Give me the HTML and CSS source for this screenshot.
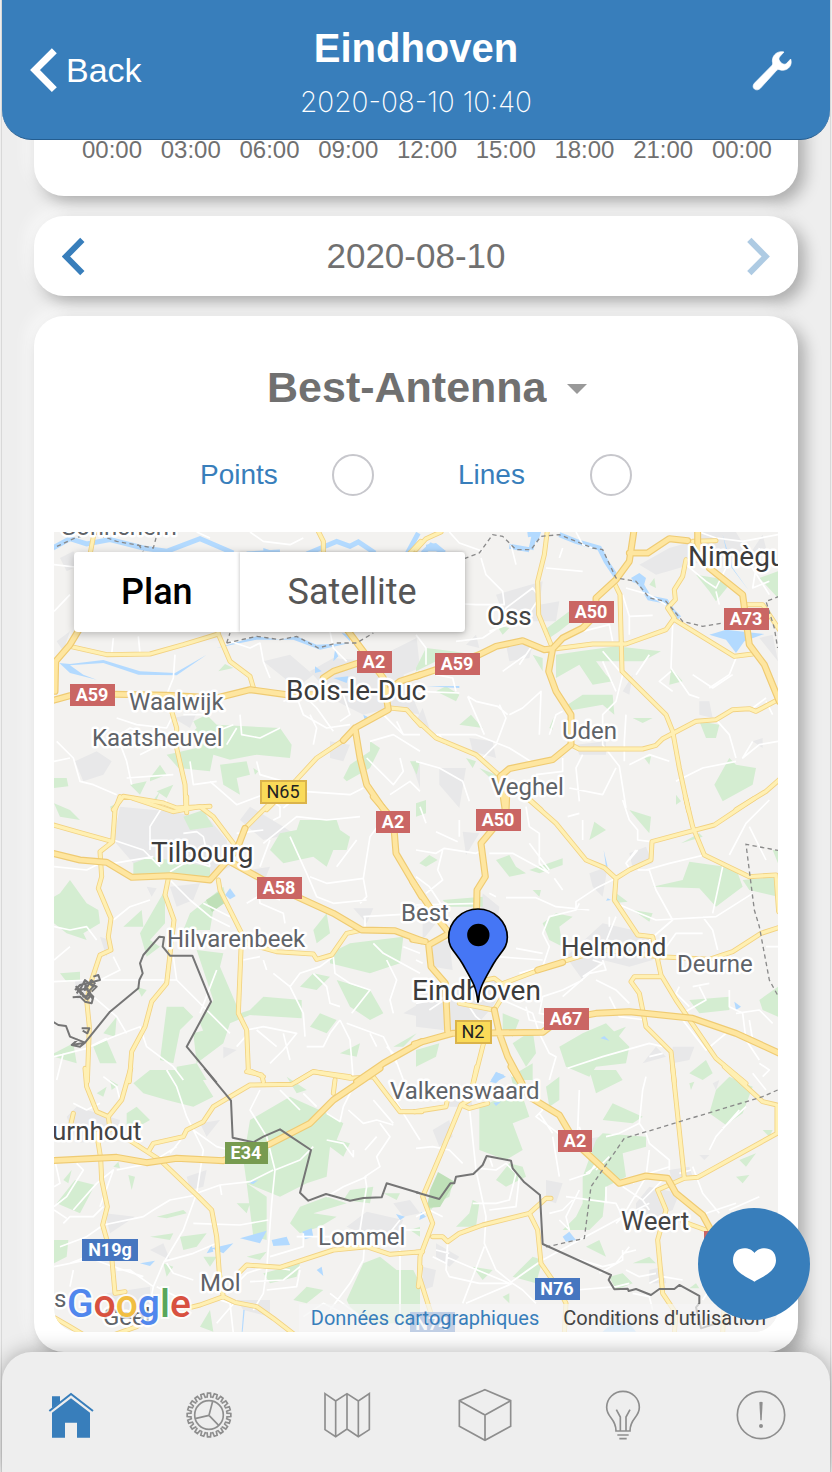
FILE: index.html
```html
<!DOCTYPE html>
<html lang="en">
<head>
<meta charset="utf-8">
<meta name="viewport" content="width=device-width, initial-scale=1">
<title>Eindhoven</title>
<link rel="stylesheet" href="styles.css">
</head>
<body>
<div class="app">
  <header class="topbar">
    <button class="back" type="button">
      <svg class="back-icon" viewBox="87 142 84 138" aria-hidden="true"><path d="M160 153 102 211 160 270"/></svg>
      <span>Back</span>
    </button>
    <div class="heading">
      <h1 class="title">Eindhoven</h1>
      <p class="subtitle">2020-08-10 10:40</p>
    </div>
    <button class="tools" type="button" aria-label="Settings">
      <svg class="tools-icon" viewBox="1008 152 120 120" aria-hidden="true">
        <path class="wrench" d="M1104 155C1086 150 1069 163 1069 182C1070 190 1071 192 1067 196L1015 249C1004 262 1020 276 1033 264L1083 209C1088 205 1092 210 1100 210C1118 209 1130 194 1124 176L1112 189C1108 193 1102 192 1097 189L1091 182C1087 176 1089 171 1093 167Z"/>
      </svg>
    </button>
  </header>

  <main class="content">
    <section class="card axis-card" aria-label="Time axis">
      <span>00:00</span><span>03:00</span><span>06:00</span><span>09:00</span><span>12:00</span><span>15:00</span><span>18:00</span><span>21:00</span><span>00:00</span>
    </section>

    <section class="card day-card">
      <button class="day-btn" type="button" aria-label="Previous day"><svg class="day-icon" viewBox="186 711 72 116" aria-hidden="true"><path d="M247 719 198 769 247 819"/></svg></button>
      <span class="day">2020-08-10</span>
      <button class="day-btn" type="button" aria-label="Next day" disabled><svg class="day-icon" viewBox="990 711 72 116" aria-hidden="true"><path d="M1000 719 1049 769 1000 819"/></svg></button>
    </section>

    <section class="card map-card">
      <div class="picker">
        <select class="picker-select" aria-label="Map mode"><option>Best-Antenna</option></select>
        <svg class="caret" viewBox="0 0 20 10" aria-hidden="true"><path d="M0 0H20L10 10Z"/></svg>
      </div>
      <div class="options">
        <label class="option"><span>Points</span><input class="round" type="checkbox"></label>
        <label class="option"><span>Lines</span><input class="round" type="checkbox"></label>
      </div>

      <div class="map">
        <svg class="map-canvas" viewBox="54 532 724 800" preserveAspectRatio="xMidYMid slice" role="img" aria-label="Map around Eindhoven">
          <defs>
            <g id="highways">
              <path transform="translate(50 528) scale(.33333)" d="M0 520 60 503 150 498 350 502 500 510 600 485 710 500 800 500M880 290 1000 450 1015 545 915 600 930 690 950 770 1005 850M915 600 880 637M820 450 850 430 925 405M1000 500 1050 460 1112 440M15 490 17 400 60 350 90 300"/>
              <path transform="translate(416 528) scale(.33333)" d="M0 445 60 425 190 380 240 355 320 338 385 365 410 362 440 330 500 300 540 260 540 210 600 155 640 100 655 0M410 362 398 430 420 490 465 560 465 650 410 695 280 722 253 745 268 850M640 75 695 75 760 32 815 38M845 0 845 45 880 120 980 200 1000 350 1045 410 1090 520"/>
              <path transform="translate(50 800) scale(.33333)" d="M0 158 90 180 170 187 245 232 360 227 480 240 560 150 585 85M540 185 640 240 740 290 850 340 935 390 1035 392 1115 422M970 -10 1030 60 1038 160 1115 290M920 845 1000 790 1115 725"/>
              <path transform="translate(416 800) scale(.33333)" d="M272 -10 270 40 195 130 208 230 183 270 180 420M-10 245 60 350 100 400 38 435 45 500 88 550 95 695M-10 418 28 425M-5 732 110 700 380 697 430 660 540 640 640 635 830 655 960 700 1095 762M365 510 440 487M235 630 250 700 275 770 318 850"/>
              <path transform="translate(50 1070) scale(.33333)" d="M0 272 200 262 290 278 380 265 520 272 660 222 780 160 850 90 990 -5"/>
              <path transform="translate(416 1070) scale(.33333)" d="M285 -10 340 80 430 135 480 220 610 340 690 318 755 325 780 370 860 435 890 490"/>
            </g>
            <g id="roads">
              <path transform="translate(50 528) scale(.33333)" d="M60 355 170 380 300 378 400 350 505 318 540 400 600 445 612 485M365 550 380 600 380 660 405 770 408 845M190 845 220 805 340 825 380 840 480 835M135 0 120 80M800 0 820 40 820 80M1112 592 1070 545 1020 540M880 637 800 690 740 755 650 845M505 318 500 280M1075 80 1112 40"/>
              <path transform="translate(416 528) scale(.33333)" d="M395 0 385 80 365 160 368 260 405 350M420 362 530 348 630 348 750 305 775 270 755 240 778 215 775 185 800 145 810 95M595 165 612 200 618 430 750 560 770 610 790 720 818 850M465 650 490 663 680 663 720 652 740 632 840 580 900 575 950 545 1000 542 1020 550 1090 513M775 275 955 385 1010 378M990 230 1040 230 1090 305M-5 570 60 630 180 680 253 745M960 845 1050 790 1090 755M0 65 30 32 75 12M830 40 900 38M325 800 375 845"/>
              <path transform="translate(50 800) scale(.33333)" d="M660 10 585 85M250 -5 370 35 450 20 490 50 550 130M410 -10 410 38M210 -10 195 30 188 125 150 155 155 230 145 265 183 355 175 410 183 450 150 465 125 540 110 600 118 680 112 845M0 72 80 95 188 125M355 235 345 285 372 360 350 550 305 605 285 680 245 755 238 845M505 240 510 270 575 400 565 640 590 690 595 810 640 830M575 400 590 430 680 455 790 462 800 478 845 465 890 400 935 390M740 845 790 815 900 830"/>
              <path transform="translate(416 800) scale(.33333)" d="M340 0 420 70 510 180 565 203 600 235 595 300 665 405 710 410 735 525 780 600 900 775 990 850M600 235 640 210 705 180 708 125 800 100 895 75 1015 -5M808 -10 830 80 865 165 1000 230 1080 225 1088 335M735 530 655 530 645 545 670 580 690 680 765 755 775 845M180 545 235 535 262 555 260 590 235 630 130 610M262 550 370 510M440 485 490 470 560 450 730 470 880 478 950 455 1035 400 1090 382M205 720 172 850"/>
              <path transform="translate(50 1070) scale(.33333)" d="M105 -5 110 50 140 125 175 140 215 90 242 -5M175 140 180 180M140 190 152 265 155 330 172 410 158 465 185 560 195 670 225 665M230 205 330 270 440 375 485 420 500 500 508 610 520 680M295 245 310 220 400 200 410 180 460 155 490 110 600 45 725 43 790 5 900 25 970 20 1050 125 1115 125M590 5 635 15 640 35M855 30 850 70M410 715 450 705 520 680 555 697 620 710 670 745 735 795M570 605 590 585 690 592 850 540 950 530 1020 553 1115 545M0 735 60 770 110 800M70 130 62 165M190 795 260 770 300 745M1112 590 1105 650"/>
              <path transform="translate(416 1070) scale(.33333)" d="M182 -10 160 90 135 105 75 250 20 380 50 460 12 560 10 620 48 740M-5 125 90 110 95 85M135 105 160 115 215 100M50 500 80 500 95 515 130 490 200 465 340 430 390 385 405 385M340 430 365 480 375 580 430 660 450 700 445 790M770 -5 805 325 845 322 1083 190 1083 105 1040 95 925 -10M805 325 725 360 750 420 725 510 740 670 780 730 775 790M800 455 870 480M0 547 20 545M925 700 920 790"/>
            </g>
          </defs>

          <rect class="land" x="54" y="532" width="724" height="800"/>

          <g class="town">
            <path transform="translate(50 528) scale(.33333)" d="M180 190 240 130 250 200 200 270ZM20 340 60 310 40 370ZM370 570 440 555 420 600ZM75 700 140 670 185 700 160 740 100 760ZM640 400 720 380 790 440 740 480ZM780 430 850 390 960 400 1100 330 1110 420 1060 440 1110 560 1020 540 940 560 860 520ZM840 640 900 650 880 700 840 690ZM1090 720 1110 710V780ZM30 90 70 70 90 110 50 130Z"/>
            <path transform="translate(416 528) scale(.33333)" d="M240 200 380 160 370 230 430 220 420 280 270 280ZM270 350 350 350 340 390 280 400ZM150 350 180 320 190 360ZM670 110 760 60 830 40 860 12 960 12 1000 80 1040 20 1050 60 980 110 880 120 860 100 720 140ZM480 650 570 640 570 680 490 680ZM620 490 650 440 640 500ZM160 630 230 640 240 690 170 670ZM20 540 40 600 0 580ZM70 720 150 720 130 840 70 770ZM850 520 880 520 890 570 850 560ZM1010 640 1040 630V660ZM1030 330 1070 320 1086 400Z"/>
            <path transform="translate(50 800) scale(.33333)" d="M210 20 370 35 480 60 530 120 540 200 480 230 250 190 190 120ZM570 60 600 20 700 80 730 100 640 120ZM360 260 450 250 430 300 380 320ZM290 260 320 265 305 290ZM910 325 970 325 950 370ZM75 540 110 540 105 590 80 600ZM520 740 560 750 520 775ZM600 210 660 200 640 250ZM150 410 180 420 170 470ZM1060 640 1110 610V650Z"/>
            <path transform="translate(416 800) scale(.33333)" d="M140 95 190 100 150 165ZM640 160 690 140 710 190 650 205ZM520 220 575 200 560 290 530 260ZM200 280 250 320 240 400 190 370ZM50 430 100 420 110 510 50 500ZM0 590 100 560 230 540 260 560 230 620 160 700 0 680ZM450 470 560 370 650 390 720 420 710 480 640 500 560 480 500 540ZM680 790 720 740 750 770ZM770 740 835 740 820 780 770 790ZM20 330 60 370 20 420Z"/>
            <path transform="translate(50 1070) scale(.33333)" d="M50 140 80 110 210 150 200 200 80 220ZM410 320 470 300 460 350 420 360ZM165 430 255 440 180 490ZM890 470 950 425 1060 450 1040 490 930 490ZM560 690 660 690 660 740 580 720ZM450 160 510 150 470 200ZM1030 400 1080 390 1110 430 1060 440ZM680 120 720 90 720 130ZM170 670 300 650 300 730 180 760ZM300 540 340 520 360 570Z"/>
            <path transform="translate(416 1070) scale(.33333)" d="M50 180 100 150 110 200 70 230ZM60 520 130 560 100 590 60 560ZM20 590 60 600 50 650 20 660ZM390 330 440 340 420 400 390 390ZM660 400 700 350 790 370 770 420 700 450 660 430ZM760 300 820 290 830 320 770 340ZM700 600 740 590 750 640 700 640ZM500 210 550 200 530 250ZM890 40 910 30 900 60ZM850 255 880 255 865 270ZM90 60 160 60 170 110 100 110Z"/>
          </g>

          <g class="green">
            <path transform="translate(50 528) scale(.33333)" d="M505 430 525 408 550 420ZM430 580 470 560 500 590 690 600 725 650 720 690 620 680 540 695 490 680 480 730 385 720 350 680 440 660 420 620 440 600ZM510 710 590 700 600 740 560 750 570 800 520 770ZM300 750 330 710 350 740 300 760ZM12 750 50 750 55 775 12 780ZM240 770 290 760 270 800ZM320 790 370 770 350 810ZM880 750 900 710 960 670 960 640 990 660 960 720 890 760ZM1080 700 1110 700 1100 740ZM300 830 330 790 310 840ZM610 720 625 730 615 740Z"/>
            <path transform="translate(416 528) scale(.33333)" d="M380 310 460 250 480 270 430 310 400 330ZM240 290 280 300 260 320ZM0 420 30 360 110 370 180 380 60 400 0 430ZM420 380 490 370 600 355 735 370 680 400 540 400 570 440 590 460 530 470 490 410 420 450ZM60 490 90 475 130 500 120 520ZM440 540 500 500 590 500 595 560 560 530 450 550ZM130 590 165 560 200 600ZM400 600 412 570 410 605ZM650 570 710 570 680 585ZM760 470 765 420 800 460ZM840 140 900 150 940 170 900 220 880 190ZM1030 150 1086 130V210ZM700 170 715 150 720 180ZM850 580 910 590 900 630 870 630ZM895 770 940 690 960 710 1020 720 1010 770 920 820ZM685 690 705 685 700 710ZM150 690 180 700 170 720ZM190 720 240 740 245 770ZM350 380 380 390 380 430ZM780 800 795 820 780 830Z"/>
            <path transform="translate(50 800) scale(.33333)" d="M30 280 60 240 110 310 145 330 150 370 100 400 110 420 50 400 12 370V290ZM250 190 300 170 480 200 480 230 250 230ZM660 150 690 100 740 90 750 60 860 60 870 90 900 110 890 150 850 150 830 200 790 170 700 190ZM400 50 460 30 490 80 420 90ZM270 400 345 270 345 370 300 420 330 440 290 470ZM220 380 275 330 280 380ZM470 300 520 260 530 300 490 330 480 390 400 390 420 340ZM790 390 830 340 840 400 800 430ZM440 450 520 460 510 500 570 640 600 630 640 590 755 600 755 655 600 645 540 670 480 740 450 670 490 600ZM840 460 900 430 1060 410 1050 490 960 520 840 490ZM750 560 790 520 840 530 800 570ZM860 540 960 570 1000 640 960 660 900 620ZM780 680 810 640 860 660 830 700ZM350 620 400 620 430 650 390 690 370 790 330 780ZM430 700 540 670 520 730 440 790ZM160 700 200 650 195 710ZM130 740 170 720 200 790 150 790ZM30 520 90 515 90 540 50 545ZM870 760 930 730 920 770ZM1030 740 1100 700 1060 740ZM260 560 290 570 275 590ZM12 760 70 730 80 790 12 770ZM12 10 60 30 90 60 30 50ZM380 800 440 790 470 840 380 840ZM180 20 200 10 195 60Z"/>
            <path transform="translate(416 800) scale(.33333)" d="M10 190 40 165 65 180 30 200ZM240 180 280 165 300 200 330 220 280 230ZM340 210 440 175 440 195 370 220ZM520 120 535 65 570 90ZM640 30 705 50 700 100ZM710 260 800 240 820 185 960 205 980 260 900 320 850 265ZM380 370 420 340 470 350 430 380 440 440 400 420ZM80 300 200 290 200 320 100 320ZM590 310 595 275 635 305ZM650 330 710 340 700 365ZM980 240 1086 230V290L1000 270ZM820 600 940 590 940 630 850 640ZM1030 600 1086 560V650L1040 630ZM430 740 500 700 570 670 640 740 630 790 540 800 520 830 450 800ZM260 640 310 660 290 710 260 690ZM290 730 350 690 360 760 330 800ZM0 750 70 730 60 770 0 800ZM820 820 870 780 890 820 860 840ZM300 820 350 790 350 840 310 840ZM350 270 375 270 370 290ZM0 10 30 0V40L0 50ZM580 700 630 680 600 720ZM795 130 850 100 860 110ZM1070 150 1086 150V190Z"/>
            <path transform="translate(50 1070) scale(.33333)" d="M250 40 300 0 440 0 490 80 430 110 350 90 280 70ZM140 70 170 50 160 80ZM180 30 205 45 185 60ZM230 130 260 110 300 150 230 190ZM20 400 75 330 135 345 90 430ZM40 330 65 300 55 340ZM600 150 720 80 830 130 880 160 860 210 900 220 880 260 840 230 830 320 770 340 690 380 590 340 580 270ZM710 20 770 60 740 70ZM235 315 255 320 245 360ZM190 290 205 275 210 295ZM320 440 400 420 410 430 350 445ZM300 500 370 490 360 510ZM390 500 470 490 440 530 400 540ZM560 400 600 400 590 430ZM720 460 750 410 830 380 890 400 790 430 860 440 810 470 750 490ZM900 360 970 350 960 400 880 390ZM590 340 650 380 650 510 610 500ZM590 560 650 545 630 570ZM640 610 750 580 740 620 660 640ZM730 690 770 650 820 660 770 700ZM890 690 940 580 990 560 1040 600 1090 600 1110 640V760H960L900 710ZM12 510 55 510 50 560 12 580ZM450 770 480 720 490 785ZM340 580 370 590 350 620ZM460 560 500 560 480 590ZM1000 370 1050 370 1040 390ZM1080 480 1110 470V500Z"/>
            <path transform="translate(416 1070) scale(.33333)" d="M190 110 240 90 320 80 340 140 290 160 320 240 270 270 190 240 190 190ZM390 50 430 20 430 90 400 110ZM560 150 590 100 680 140 650 160ZM520 0 600 0 620 30 540 70ZM880 130 900 60 940 20 1010 50 980 130 930 165ZM540 210 560 190 690 200 690 230 620 250 630 320 570 350 560 440 520 480 440 480 480 440 500 400 500 320ZM240 330 280 280 320 290 330 320 270 350ZM60 400 30 440 60 340 110 340 100 380ZM120 470 160 430 170 390 190 400 180 470ZM510 530 550 510 570 560ZM580 620 620 610 650 640 600 660ZM650 580 700 560 720 580ZM170 590 230 600 200 630ZM350 560 380 570 360 640 290 620ZM970 270 1020 250 990 290ZM960 320 1000 315 980 340ZM840 640 850 655 820 655ZM280 0 310 10 340 70 290 40ZM1040 180 1070 180 1060 200ZM820 40 835 35 825 60ZM260 680 280 670V700Z"/>
          </g>
          <path class="forest" d="M430 1190 438 1172 455 1182 440 1207 427 1208ZM206 900 222 890 226 902 212 912Z"/>

          <g class="water">
            <path transform="translate(50 528) scale(.33333)" d="M0 65 60 32 110 48 180 35 280 60 350 70 450 32 550 75M770 78 860 40 900 55 925 42 975 75M1070 80 1105 15M590 78 690 72"/>
            <path transform="translate(416 528) scale(.33333)" d="M20 75 45 52 85 75M345 65 355 20M335 20 365 15M280 55 340 65M430 20 480 40 550 60 570 100 600 145M650 155 670 160 700 210 750 220 770 250 790 270"/>
          </g>
          <g class="pond">
            <path transform="translate(50 528) scale(.33333)" d="M28 405 60 408 160 396 270 430 375 435 470 380 380 442 265 440 160 405 60 412 100 440 140 455 60 435ZM500 360 620 325 690 335 740 325 800 350 900 345 810 365 730 335 620 335ZM850 400 855 365 865 385ZM795 435 795 415 815 430ZM850 450 895 445 890 465ZM875 315 900 320 900 340ZM940 560 960 570 945 580ZM510 220 500 245 520 240ZM640 60 670 70 640 72Z"/>
            <path transform="translate(416 528) scale(.33333)" d="M880 320 930 305 1045 318 985 340 960 375 930 335ZM645 150 670 135 690 150 680 185ZM30 475 130 474 130 480ZM920 20 940 110 1000 190 950 120ZM335 12 375 12 365 45ZM30 50 60 45 90 70 30 70Z"/>
            <path transform="translate(50 800) scale(.33333)" d="M525 285 540 265 557 288 540 298Z"/>
            <path transform="translate(416 800) scale(.33333)" d="M563 150 575 200 570 200ZM955 605 975 620 960 630ZM553 715 565 708 580 722ZM225 840 240 815 270 830 250 840ZM575 295 585 300 570 302Z"/>
            <path transform="translate(50 1070) scale(.33333)" d="M570 505 650 482 630 520ZM665 510 710 500 720 525 670 528ZM757 485 785 475 790 500 765 508ZM485 535 550 520 520 550ZM270 580 315 572 300 588ZM470 550 485 525 490 545ZM800 600 815 590 820 618ZM1038 432 1065 440 1050 450ZM595 338 625 330 610 342ZM575 785 580 720 584 720 578 785Z"/>
            <path transform="translate(416 1070) scale(.33333)" d="M222 35 245 8 265 15 240 40ZM440 500 460 485 480 510 450 515ZM10 450 15 425 30 440ZM560 785 600 750 640 760 660 785ZM232 98 255 95 240 108Z"/>
          </g>

          <g class="lanes">
            <path transform="translate(50 528) scale(.33333)" d="M12 110 100 120 140 90 230 100M190 330 185 380M265 325 270 375M60 200 12 250M375 380 370 450 350 500M540 340 600 360 630 345 640 400 660 450M600 12 640 40 720 50 760 30M440 12 480 30M570 560 575 620 630 630 690 600M200 570 260 590 350 600 370 560M400 560 470 560 520 530M20 640 70 690 90 760 130 770 200 800M200 620 230 700 245 770M180 640 240 600 300 620M12 700 60 690M420 700 430 770 500 760M230 750 370 740M480 760 560 830 640 800M620 700 630 740 700 760M730 480 760 560 830 600 900 590M700 520 760 500 800 540 850 610M780 560 800 600 790 650M880 500 900 560 870 580M840 310 850 360 890 400M1000 560 1060 620 1110 620M960 640 1030 620 1110 670M1040 580 1060 620M950 690 1030 770 1060 730 1050 690M1020 800 1080 760 1110 790M700 840 760 790 900 800 940 780M560 600 530 650M270 680 350 640M500 610 550 590"/>
            <path transform="translate(416 528) scale(.33333)" d="M100 12 130 45 200 70M195 90 210 140 260 190 265 230 180 230 145 228M285 50 300 110M390 120 500 130M430 90 440 60M480 12 500 50 530 60M260 280 270 240 350 180 365 200M220 310 330 270 370 210M120 340 200 330 260 290M0 320 30 360 30 410M60 440 110 450 120 490M0 490 130 495M155 505 180 520 245 535 275 560M155 505 205 620M280 560 320 540 375 490 370 620M330 380 260 430M350 350 310 410M400 620 420 560 440 550M620 440 600 520 560 560 560 650 610 715 630 840M500 680 480 720 490 820M630 560 625 640 625 700M560 370 620 440M600 490 560 400M500 310 580 290 590 340M620 200 640 265 710 262M640 265 640 320M630 180 700 200 750 230M770 290 765 420 820 500 850 510M765 430 730 460 770 490M700 380 660 440M950 440 890 480 830 440M960 390 940 440 880 480M810 110 870 160 900 180 930 120M900 190 910 230M1010 640 980 690 1030 650 1086 640M900 575 940 620 960 690M760 700 700 680 640 710M780 760 860 720 960 700M1010 540 1050 510M1050 520 1070 560M60 620 180 620 280 660 360 710M70 620 90 650M200 690 240 650 270 570 250 530M0 700 70 720 140 760 160 820M360 740 440 730 440 690M460 780 560 800 600 720M850 12 900 30 980 40 1086 20M1030 60 1010 180 1060 160M990 90 1060 200"/>
            <path transform="translate(50 800) scale(.33333)" d="M12 200 110 210 150 190M190 120 280 150 330 200M350 0 300 80 300 150M400 100 440 95 460 110 480 200M190 190 310 170M360 215 420 180 480 200M660 0 690 20 690 50 670 60M640 130 740 50 830 60 930 50M720 110 770 220 800 290 850 310 950 300M660 120 630 200M560 100 640 90M780 230 830 250 940 235 960 110 990 70M940 235 950 290 930 310M860 200 920 120M940 350 1110 340M945 350 945 390 1000 400M360 240 420 300 480 350 540 380M590 310 640 280 690 300M625 270 630 310 700 340 705 370M460 310 540 350M190 360 240 320 300 300M12 380 60 390 110 380 140 420M190 470 210 510 110 560M12 545 120 540 380 540M370 470 380 540 480 640 540 700M500 510 450 640M580 480 630 470M640 480 650 510M670 520 720 560 760 640 765 710M720 560 750 520 810 500 850 470M790 520 830 560 840 610 870 620M850 470 855 520 900 550 960 570 905 640M1030 640 1020 600 1040 540 1010 480M970 430 1000 460 1110 520M590 690 640 680 740 700 700 750 660 790M680 740 620 690M700 700 720 780M870 660 900 720 910 840M870 660 840 700 820 740 770 740M960 700 980 740M890 670 1000 710 1040 790M120 740 190 710 270 680 290 740 370 800 400 840M130 590 200 650 230 700M12 770 110 745 170 715M60 440 12 480M560 740 595 700M1060 840 1030 760 1010 740M40 760 20 840M1060 440 1110 460"/>
            <path transform="translate(416 800) scale(.33333)" d="M12 20 30 70M0 150 60 160 85 145 180 160 200 150M60 95 125 125M130 110 130 60M80 150 65 210 80 240 30 280M0 230 40 260 80 320M0 315 190 310M330 20 340 80 370 100 370 190 395 215M220 160 290 160 400 220M400 210 340 130M500 60 500 120M455 50 490 40M620 0 640 60 665 90 665 120 705 125M660 150 630 190 640 205M665 150 640 180M415 235 440 270M220 280 240 290 M270 293 360 293 420 320 520 330M600 235 540 265 480 305 480 330 400 350 380 400 400 440 380 500 310 520M580 350 580 380M480 330 490 310M380 460 300 445M240 470 380 480M600 310 670 340 720 360 900 350 1010 280M665 210 700 210 720 270 770 360 700 420M865 165 760 190 690 210M940 165 990 70 1060 0M1000 80 1050 180M920 200 890 340M860 350 890 390 905 450M730 470 780 400 860 400M1050 440 1090 440M890 480 960 510M500 530 560 490 530 480M500 540 440 570 380 590 370 640 430 650M560 480 570 510 520 520 440 590M540 540 600 570 640 610M260 600 350 640 370 700 400 760 420 770 400 840M330 620 340 660 390 670M40 630 100 590 0 610M820 620 780 580 790 560M800 640 870 600 850 560M940 570 940 620 980 640 990 720 1030 780M960 640 1030 630 1070 670M800 660 870 750 930 700 950 690M455 805 560 770 700 730 740 740M690 660 610 650 580 590M830 560 880 550M240 700 180 650 160 620M700 770 740 760M1030 790 1060 810 1040 830M560 450 600 350M0 480 20 490M430 650 480 690M1000 660 1010 720"/>
            <path transform="translate(50 1070) scale(.33333)" d="M350 0 380 50 410 140 430 180 460 240 440 370 400 480 340 580 310 650 300 700M430 180 500 230 540 240M630 60 600 120 650 200 675 300 665 400 650 600 640 670 610 720M675 300 750 270 790 230M440 370 510 345 600 335 670 300M510 345 515 375M380 230 300 280 200 300M150 100 110 120 70 100M160 20 200 50 210 90M12 410 50 380 100 300 80 280M40 460 60 440 130 440 160 410M50 445 12 420M30 530 110 500 160 465 280 440 310 420 360 390 440 375M70 420 140 340 190 300 150 410M60 580 110 560 190 590M190 590 280 620M430 460 570 465 655 450M340 575 430 550 500 520M350 580 370 610 430 630 M660 560 760 530 760 490M740 500 900 500M600 635 700 630 750 590M830 130 870 155 880 110 910 50M690 60 750 120M760 70 800 110M895 120 940 160 980 150 1030 165M970 90 1030 160M830 210 880 220 910 260 910 240M990 160 1020 200 980 260 990 290 945 320 950 350 930 480M945 240 980 200M1110 210 1060 130 1030 80M945 500 940 570 900 640 840 720M1050 540 1050 780M1050 450 1010 500 950 500M1110 480 1050 480M530 670 590 610 650 590M720 600 600 580M12 590 110 570M60 650 70 600M310 650 240 600 200 600M560 690 500 760M320 650 400 690M950 320 880 350 830 380M400 200 360 250M750 600 740 650 650 660M12 260 30 340 12 350M760 740 820 700 900 740M840 670 930 740M550 790 540 700 510 690"/>
            <path transform="translate(416 1070) scale(.33333)" d="M160 110 180 300 210 440 205 520 240 600 290 640 320 660 360 700M205 530 140 700 M95 540 90 600 100 620 190 640 280 640M90 560 160 590 280 640 380 570 500 505 620 440 700 400M290 640 220 670 150 700M280 640 350 590 380 570M280 0 290 20 M340 60 380 120 360 140 440 200M370 130 410 190M410 200 430 320M490 60 485 180M500 200 490 170M510 310 540 290M460 330 520 310 540 280M450 380 600 400 620 440M430 450 460 480 450 440 490 360M570 200 610 190 670 160 690 190 700 220 760 270 760 300M670 160 680 60 690 20M700 240 690 320 620 440 600 460M570 350 570 400M760 290 700 310 650 340M620 350 680 390 700 420M680 390 750 320M830 290 860 370 910 430M825 300 790 310M970 120 900 200 880 240M920 175 990 110M1050 60 1010 10M230 290 220 260M190 295 240 300 270 280 300 310 280 390 240 400 170 400M310 320 300 410 220 420M0 235 50 230 100 240 140 280M460 560 560 590 600 580 640 530M480 660 600 650 640 640M550 610 620 570 620 540M800 630 740 620 700 640M650 670 700 680 710 720 M660 540 620 550M860 690 920 600 880 570M0 440 40 420 80 440M60 540 100 550M50 560 90 580 95 520M870 430 960 400M1030 380 940 420M400 430 440 420 470 390M580 260 540 300M630 600 670 620 720 610"/>
          </g>

          <use class="road-edge" href="#roads"/>
          <use class="road-fill" href="#roads"/>
          <use class="highway-edge" href="#highways"/>
          <use class="highway-fill" href="#highways"/>

          <g class="province">
            <path transform="translate(50 528) scale(.33333)" d="M0 65 75 30 130 15 200 40 310 60 318 30M265 50 280 70M530 345 540 315M530 345 620 325 690 335 740 325 805 360 860 345 920 345 970 315"/>
            <path transform="translate(416 528) scale(.33333)" d="M145 92 190 75 230 20 260 25 300 65 345 65 375 25 430 20 530 60 560 65 600 150 660 160 700 210 750 220 800 280 860 295 920 285M1090 205 1050 220 1075 300 1085 360"/>
            <path transform="translate(416 800) scale(.33333)" d="M1090 152 990 133 1015 330 1030 380 1060 540 1090 595"/>
            <path transform="translate(416 1070) scale(.33333)" d="M1085 60 1040 80 625 205 525 350 505 505 385 532"/>
          </g>
          <g class="border">
            <path transform="translate(50 800) scale(.33333)" d="M0 660 25 675 48 678 60 710 105 728 180 635 265 565 268 540 278 520 270 490 280 465 328 410 342 412 338 440 360 467 427 467 483 605 410 740 500 848M65 735 105 728 90 740 65 735 85 718M95 685 118 685 112 700 98 692M75 570 90 555 110 550 130 545 150 540 145 525 130 530M68 592 90 590 105 605 125 610 130 590 115 575 130 560 105 540 95 560 80 580M90 570 110 565 120 585 100 590ZM120 550 140 560 125 575M110 600 125 585M78 558 85 575M100 545 112 560 124 540 136 552M96 578 108 596 118 572 128 598M82 562 94 584M108 548 104 570 116 566"/>
            <path transform="translate(50 1070) scale(.33333)" d="M463 -5 543 92 548 203 610 217 640 200 690 178 783 240 750 368 775 392 828 372 900 392 940 384 995 382 1010 340 1110 370"/>
            <path transform="translate(416 1070) scale(.33333)" d="M0 367 70 387 103 340 115 340 120 320 172 312 200 285 212 258 285 272 290 295 325 337 372 375 380 522 585 615 578 630 595 658 635 656 638 663 660 657 705 675 730 657 775 657 790 645 850 678 850 700 840 712 855 775 900 760"/>
          </g>

          <g class="place">
            <text x="60" y="535">Gorinchem</text>
            <text x="129" y="710">Waalwijk</text>
            <text x="92" y="746">Kaatsheuvel</text>
            <text x="562" y="739">Uden</text>
            <text x="491" y="795">Veghel</text>
            <text x="167" y="947">Hilvarenbeek</text>
            <text x="401" y="921">Best</text>
            <text x="677" y="972">Deurne</text>
            <text x="390" y="1099">Valkenswaard</text>
            <text x="318" y="1245">Lommel</text>
            <text x="200" y="1291">Mol</text>
            <text x="103" y="1325">Geel</text>
            <text x="54" y="1307">s</text>
          </g>
          <g class="place town-name">
            <text x="487" y="625">Oss</text>
            <text x="561" y="956">Helmond</text>
            <text x="52" y="1140">urnhout</text>
            <text x="621" y="1230">Weert</text>
          </g>
          <g class="place city-name">
            <text x="688" y="566">Nimègue</text>
            <text x="286" y="700">Bois-le-Duc</text>
            <text x="151" y="862">Tilbourg</text>
            <text x="412" y="1000">Eindhoven</text>
          </g>

          <g class="shield red">
            <rect x="70" y="684" width="45" height="22"/><text x="92" y="701">A59</text>
            <rect x="357" y="651" width="35" height="22"/><text x="374" y="668">A2</text>
            <rect x="435" y="653" width="45" height="22"/><text x="457" y="670">A59</text>
            <rect x="569" y="601" width="45" height="22"/><text x="591" y="618">A50</text>
            <rect x="724" y="608" width="45" height="22"/><text x="746" y="625">A73</text>
            <rect x="376" y="811" width="34" height="22"/><text x="393" y="828">A2</text>
            <rect x="476" y="809" width="45" height="22"/><text x="498" y="826">A50</text>
            <rect x="257" y="877" width="45" height="22"/><text x="279" y="894">A58</text>
            <rect x="544" y="1008" width="45" height="22"/><text x="566" y="1025">A67</text>
            <rect x="558" y="1130" width="34" height="22"/><text x="575" y="1147">A2</text>
            <rect x="704" y="1231" width="45" height="22"/>
          </g>
          <g class="shield yellow">
            <rect x="261" y="781" width="45" height="22"/><text x="283" y="798">N65</text>
            <rect x="456" y="1021" width="35" height="22"/><text x="473" y="1038">N2</text>
          </g>
          <g class="shield euro"><rect x="225" y="1142" width="43" height="22"/><text x="246" y="1159">E34</text></g>
          <g class="shield blue">
            <rect x="82" y="1239" width="56" height="22"/><text x="110" y="1256">N19g</text>
            <rect x="535" y="1278" width="45" height="22"/><text x="557" y="1295">N76</text>
            <rect x="410" y="1312" width="45" height="22"/><text x="432" y="1330">N74</text>
          </g>

          <g class="marker" transform="translate(416 800) scale(.33333)">
            <path d="M186 608C181 560 170 545 140 492 116 452 98 445 98 412A88 85 0 0 1 274 412C274 445 256 452 232 492 202 545 191 560 186 608Z"/>
            <circle cx="187" cy="405" r="31"/>
          </g>
          <text class="brand" x="67" y="1317"><tspan class="b">G</tspan><tspan class="r">o</tspan><tspan class="y">o</tspan><tspan class="b">g</tspan><tspan class="g">l</tspan><tspan class="r">e</tspan></text>
        </svg>
        <div class="map-type">
          <button class="type-btn active" type="button">Plan</button>
          <button class="type-btn" type="button">Satellite</button>
        </div>
        <div class="credits">
          <a class="credit-data" href="#data">Données cartographiques</a>
          <a class="credit-terms" href="#terms">Conditions d'utilisation</a>
        </div>
      </div>
    </section>
  </main>

  <button class="fab" type="button" aria-label="Favourite">
    <svg class="fab-icon" viewBox="950 528 128 104" aria-hidden="true"><path d="M1014 546C1003 526 950 521 950 568C951 600 985 614 1014 631C1043 614 1077 600 1078 568C1078 521 1025 526 1014 546Z"/></svg>
  </button>

  <nav class="tabs" aria-label="Main">
    <a class="tab" href="#home" aria-label="Home" aria-current="page">
      <svg class="tab-icon" viewBox="129 142 168 168"><path class="solid" d="M156 219 213 176 270 219V294H231V249H195V294H156ZM156 170H180V187L156 205Z"/><path class="roof" d="M148 214 213 163 279 214"/></svg>
    </a>
    <a class="tab" href="#settings" aria-label="Settings">
      <svg class="tab-icon" viewBox="-84 -84 168 168">
        <defs>
          <path id="tooth" d="M-8.500 -53.300-5.500 -54-4.500 -65.500H4.500L5.500 -54 8.500 -53.300"/>
          <g id="teeth"><use href="#tooth"/><use href="#tooth" transform="rotate(18)"/><use href="#tooth" transform="rotate(36)"/><use href="#tooth" transform="rotate(54)"/><use href="#tooth" transform="rotate(72)"/></g>
        </defs>
        <use href="#teeth"/><use href="#teeth" transform="rotate(90)"/><use href="#teeth" transform="rotate(180)"/><use href="#teeth" transform="rotate(270)"/>
        <circle r="43"/><path d="M0 1 11 -41M0 1-42 11M0 1 29 31"/>
      </svg>
    </a>
    <a class="tab" href="#map" aria-label="Map">
      <svg class="tab-icon" viewBox="957 142 168 168"><path d="M975 162 1007 184 1041 162 1075 184 1108 162V270L1075 291 1041 268 1007 291 975 270ZM1007 184V291M1041 162V268M1075 184V291"/></svg>
    </a>
    <a class="tab" href="#box" aria-label="Network">
      <svg class="tab-icon" viewBox="123 142 168 168"><path d="M207 150 284 183V260L207 302 130 260V183ZM130 183 207 226 284 183M207 226V302"/></svg>
    </a>
    <a class="tab" href="#tips" aria-label="Tips">
      <svg class="tab-icon" viewBox="537 142 168 168"><path d="M600 274C600 235 572 235 572 203A49 48 0 0 1 670 203C670 235 642 235 642 274ZM601 210 613 232V274M642 210 630 232V274M604 286H638M610 297H632"/></svg>
    </a>
    <a class="tab" href="#info" aria-label="Information">
      <svg class="tab-icon" viewBox="951 142 168 168"><circle cx="1035" cy="226" r="71"/><path class="solid" d="M1030 188Q1035 184 1040 188L1037 242H1033Z"/><circle class="solid" cx="1035" cy="259" r="6"/></svg>
    </a>
  </nav>
</div>
</body>
</html>
```
FILE: styles.css
```css
* { box-sizing: border-box; }

body {
  margin: 0;
  background: #eee;
  color: #707070;
  font-family: "Liberation Sans", Helvetica, Arial, sans-serif;
}

button { padding: 0; border: 0; background: none; color: inherit; font: inherit; cursor: pointer; }
svg { display: block; }

.app {
  min-height: 100vh;
  margin: 0 1px;
  border: solid #d8d8d8;
  border-width: 0 1px;
  overflow: hidden;
}

/* Header */
.topbar {
  position: fixed;
  z-index: 3;
  top: 0;
  left: 2px;
  right: 2px;
  display: grid;
  grid-template-columns: 1fr auto 1fr;
  align-items: center;
  padding: 20px 38px 11px 28px;
  border-bottom: 1px solid #245d90;
  border-radius: 0 0 30px 30px;
  background: #387ebb;
  color: #fff;
}
.back { display: flex; align-items: center; gap: 8px; justify-self: start; padding-bottom: 8px; font-size: 34px; line-height: 40px; }
.back-icon { width: 28px; height: 46px; fill: none; stroke: #fff; stroke-width: 21; }
.heading { padding-left: 10px; text-align: center; }
.title { margin: 0; font-size: 40px; font-weight: 700; line-height: 56px; }
.subtitle { margin: 0; font: 200 28px/52px Inter, "Liberation Sans", sans-serif; }
.tools { justify-self: end; padding-bottom: 6px; }
.tools-icon { width: 40px; height: 40px; }
.wrench { fill: #fff; stroke: #fff; stroke-width: 2; }

/* Cards */
.content {
  display: flex;
  flex-direction: column;
  gap: 20px;
  padding: 120px 32px;
}
.card {
  border-radius: 30px;
  background: #fff;
  box-shadow: 7px 7px 16px rgba(0, 0, 0, .28), -7px -7px 16px rgba(255, 255, 255, .6);
}
.axis-card {
  display: flex;
  justify-content: space-between;
  padding: 16px 26px 32px 48px;
  border-radius: 0 0 30px 30px;
  font-size: 24px;
  line-height: 28px;
}
.day-card { display: flex; align-items: center; justify-content: space-between; padding: 20px 28px; }
.day { font-size: 35px; line-height: 40px; }
.day-icon { width: 24px; height: 39px; fill: none; stroke: #387ebb; stroke-width: 18; }
.day-btn:disabled { opacity: .4; }

.map-card { padding: 36px 20px 20px; }
.picker { display: flex; align-items: center; justify-content: center; gap: 20px; padding-left: 22px; }
.picker-select {
  appearance: none;
  height: 70px;
  padding: 0;
  border: 0;
  background: none;
  color: #707070;
  font: 700 43px/70px "Liberation Sans", Helvetica, Arial, sans-serif;
}
.caret { width: 20px; height: 10px; margin-top: 4px; fill: #999; }
.options { display: flex; justify-content: center; gap: 84px; padding: 32px 0 36px; }
.option {
  display: grid;
  grid-template-columns: 132px 42px;
  align-items: center;
  color: #387ebb;
  font-size: 28px;
  line-height: 42px;
}
.round { appearance: none; width: 42px; height: 42px; margin: 0; border: 2px solid #c7c7cc; border-radius: 50%; }
.round:checked { background: #387ebb; }

/* Map */
.map { position: relative; overflow: hidden; border-radius: 0 0 24px 24px; font-family: Roboto, sans-serif; }
.map-canvas { width: 100%; height: auto; }
.land { fill: #f3f2f0; }
.town { fill: #e8e8e9; }
.green { fill: #d4edd1; }
.forest { fill: #bfe0b8; }
.water { fill: none; stroke: #b3daff; stroke-width: 15; }
.pond { fill: #b3daff; }
.lanes { fill: none; stroke: #fff; stroke-width: 5; stroke-linejoin: round; }
.road-edge, .road-fill, .highway-edge, .highway-fill { fill: none; stroke-linejoin: round; stroke-linecap: round; }
.road-edge { stroke: #f2d282; stroke-width: 15; }
.road-fill { stroke: #fff0b3; stroke-width: 10; }
.highway-edge { stroke: #efcb73; stroke-width: 21; }
.highway-fill { stroke: #fee6a0; stroke-width: 14; }
.province { fill: none; stroke: #8a8a8a; stroke-width: 4; stroke-dasharray: 13 10; }
.border { fill: none; stroke: #757575; stroke-width: 6; stroke-linejoin: round; }

.place { fill: #5f6368; stroke: #fff; stroke-width: 5px; stroke-linejoin: round; paint-order: stroke; font-size: 24px; }
.town-name { fill: #444; font-size: 26px; }
.city-name { fill: #3c3c3c; font-size: 28px; }

.shield { font-size: 18px; font-weight: 700; text-anchor: middle; }
.shield text { fill: #fff; }
.red rect { fill: #ca6664; }
.blue rect { fill: #4676c0; }
.euro rect { fill: #779b50; }
.yellow { font-weight: 400; }
.yellow rect { fill: #fadb59; stroke: #dbb44b; stroke-width: 2; }
.shield.yellow text { fill: #222; }

.marker { fill: #4576f5; stroke: #000; stroke-width: 5; }
.marker circle { fill: #000; }

.brand { stroke: #fff; stroke-width: 4px; stroke-opacity: .8; paint-order: stroke; font-size: 39px; font-weight: 500; }
.b { fill: #5187ed; }
.r { fill: #d85140; }
.y { fill: #f1be42; }
.g { fill: #58a65c; }

.map-type { position: absolute; top: 20px; left: 20px; display: flex; border-radius: 4px; background: #fff; box-shadow: 0 2px 8px rgba(0, 0, 0, .25); }
.type-btn { padding: 0 47px; color: #565656; font-size: 36px; line-height: 80px; }
.type-btn + .type-btn { padding: 0 48px; box-shadow: -1px 0 3px rgba(0, 0, 0, .18); }
.type-btn.active { color: #000; font-weight: 500; }

.credits {
  position: absolute;
  right: 0;
  bottom: 0;
  display: flex;
  gap: 24px;
  padding: 0 12px;
  background: rgba(245, 245, 245, .7);
  font-size: 20px;
  line-height: 28px;
}
.credits a { text-decoration: none; }
.credit-data { color: #387ebb; }
.credit-terms { color: #444; }

/* Floating button and tab bar */
.fab {
  position: fixed;
  z-index: 2;
  right: 22px;
  bottom: 152px;
  display: grid;
  place-items: center;
  width: 112px;
  height: 112px;
  border-radius: 50%;
  background: #387ebb;
}
.fab-icon { width: 43px; height: 35px; fill: #fff; }

.tabs {
  position: fixed;
  z-index: 1;
  left: 2px;
  right: 2px;
  bottom: 0;
  display: grid;
  grid-template-columns: repeat(6, 1fr);
  padding: 35px 0 29px;
  border-radius: 30px 30px 0 0;
  background: #eee;
  box-shadow: 0 0 20px rgba(0, 0, 0, .3);
}
.tab { display: grid; place-items: center; }
.tab-icon { width: 56px; height: 56px; fill: none; stroke: #8e8e8e; stroke-width: 5; }
.tab-icon .solid { fill: #8e8e8e; stroke: none; }
[aria-current] .tab-icon .solid { fill: #387ebb; }
.roof { stroke: #387ebb; stroke-width: 6; }
```
